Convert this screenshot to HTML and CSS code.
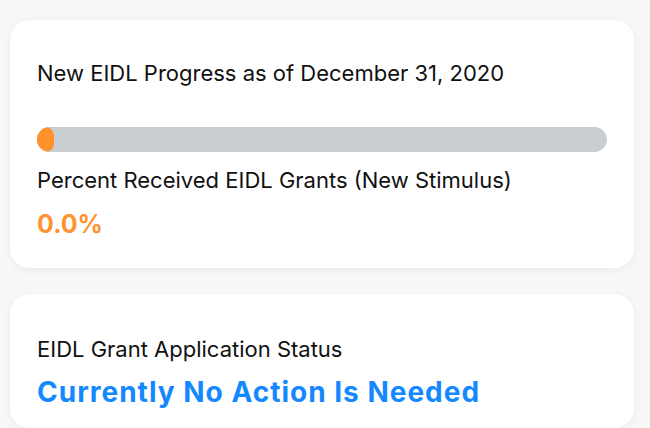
FILE: index.html
```html
<!DOCTYPE html>
<html>
<head>
<meta charset="utf-8">
<link rel="stylesheet" href="styles.css">
</head>
<body>
<div class="page">
  <section class="card card-progress">
    <h2 class="title">New EIDL Progress as of December 31, 2020</h2>
    <div class="bar"><div class="bar-fill" style="width:17px"></div></div>
    <div class="label">Percent Received EIDL Grants (New Stimulus)</div>
    <div class="percent">0.0%</div>
  </section>
  <section class="card card-status">
    <div class="label">EIDL Grant Application Status</div>
    <div class="status">Currently No Action Is Needed</div>
  </section>
</div>
</body>
</html>
```
FILE: styles.css
```css
html, body {
  margin: 0;
  padding: 0;
  background: #f7f7f7;
  font-family: Inter, "Noto Sans", sans-serif;
  color: #111;
}
.page {
  display: flex;
  flex-direction: column;
  gap: 26px;
  padding: 20px 16px 0 10px;
  height: 428px;
  box-sizing: border-box;
  overflow: hidden;
}
.card {
  background: #fff;
  border-radius: 20px;
  box-shadow: 0 2px 8px rgba(0,0,0,0.05);
  padding: 0 27px;
}
.card-progress {
  height: 248px;
  box-sizing: border-box;
  padding-top: 40px;
}
.title {
  margin: 0;
  font-size: 22px;
  font-weight: 400;
  line-height: 26px;
}
.bar {
  margin-top: 41px;
  width: 570px;
  height: 25px;
  border-radius: 12.5px;
  background: #c9ced1;
  overflow: hidden;
}
.bar-fill {
  height: 100%;
  background: #ff922b;
  border-radius: 9px;
}
.label {
  font-size: 22px;
  line-height: 26px;
  margin-top: 15px;
}
.percent {
  margin-top: 16px;
  font-size: 25px;
  font-weight: 700;
  line-height: 30px;
  color: #ff932f;
}
.card-status {
  flex: 1;
  padding-top: 42px;
}
.card-status .label {
  margin-top: 0;
}
.status {
  margin-top: 13px;
  font-size: 28px;
  font-weight: 700;
  line-height: 34px;
  letter-spacing: 1px;
  color: #1489ff;
}
```
